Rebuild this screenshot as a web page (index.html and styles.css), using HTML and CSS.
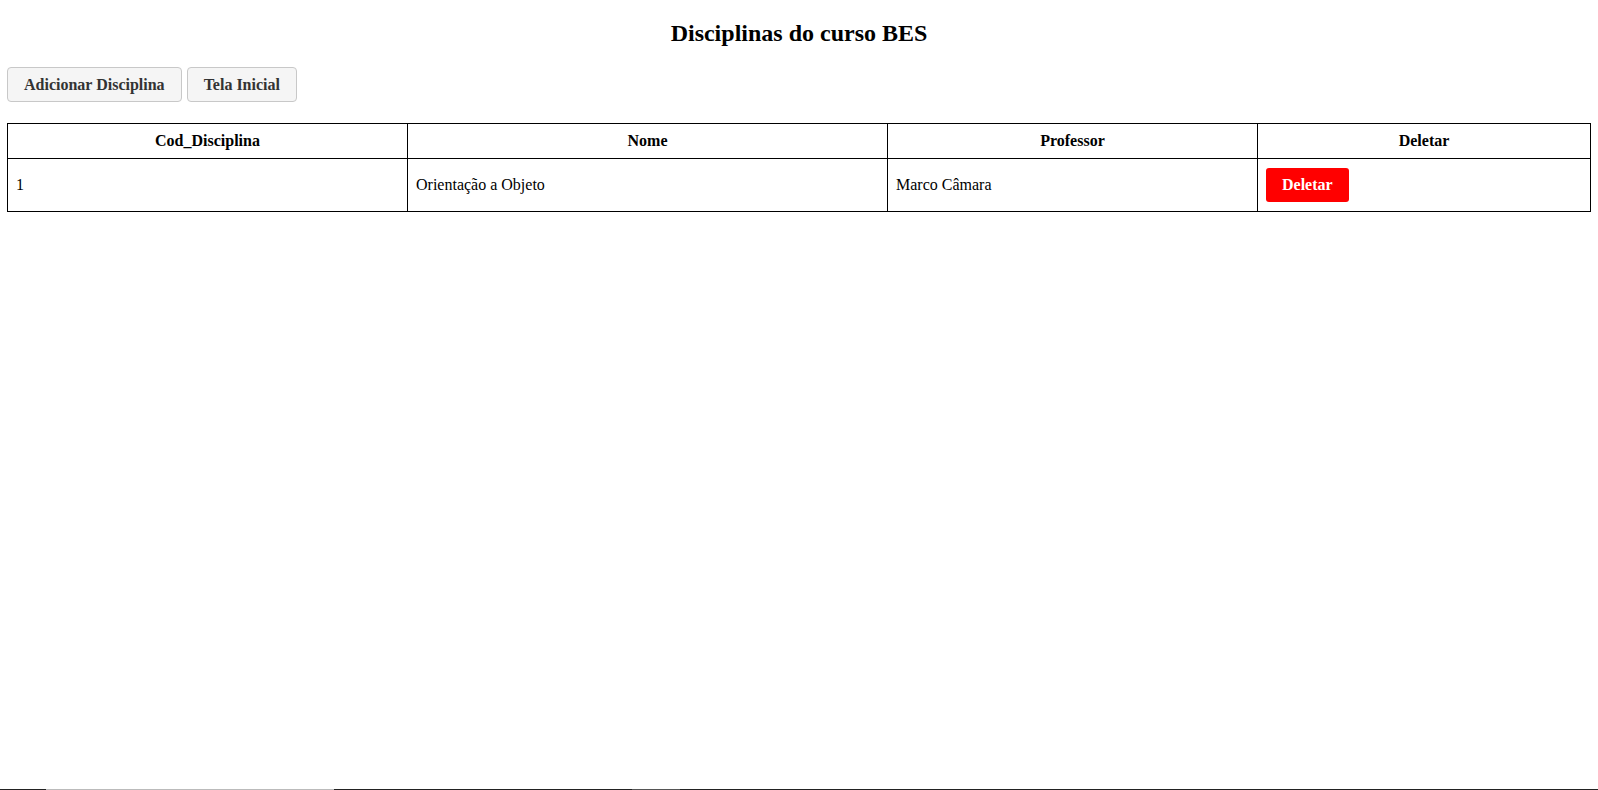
FILE: index.html
```html
<!DOCTYPE html>
<html lang="pt-BR">
<head>
<meta charset="utf-8">
<title>Disciplinas do curso BES</title>
<link rel="stylesheet" href="styles.css">
</head>
<body>
  <h2 class="title">Disciplinas do curso BES</h2>
  <div class="actions">
    <button class="btn">Adicionar Disciplina</button>
    <button class="btn">Tela Inicial</button>
  </div>
  <table class="grid">
    <colgroup>
      <col class="c1"><col class="c2"><col class="c3"><col class="c4">
    </colgroup>
    <thead>
      <tr><th>Cod_Disciplina</th><th>Nome</th><th>Professor</th><th>Deletar</th></tr>
    </thead>
    <tbody>
      <tr>
        <td>1</td>
        <td>Orientação a Objeto</td>
        <td>Marco Câmara</td>
        <td><button class="btn-del">Deletar</button></td>
      </tr>
    </tbody>
  </table>
  <div class="taskbar">
    <span class="seg s1"></span><span class="seg s2"></span><span class="seg s3"></span><span class="seg s4"></span><span class="seg s5"></span>
  </div>
</body>
</html>
```
FILE: styles.css
```css
body {
  margin: 0;
  padding: 8px 7px;
  font-family: "Liberation Serif", "Times New Roman", serif;
  font-size: 16px;
  color: #000;
  background: #fff;
}
.title {
  text-align: center;
  font-size: 24px;
  line-height: 28px;
  font-weight: bold;
  margin: 11px 0 20px;
}
.actions {
  display: flex;
  gap: 5px;
}
.btn {
  font-family: inherit;
  font-size: 16px;
  font-weight: bold;
  color: #333;
  background: #f5f5f5;
  border: 1px solid #c8c8c8;
  border-radius: 4px;
  padding: 8px 16px;
  line-height: 17px;
  cursor: pointer;
}
.grid {
  width: 100%;
  margin-top: 21px;
  border-collapse: collapse;
  table-layout: fixed;
}
.c1 { width: 400px; }
.c2 { width: 480px; }
.c3 { width: 370px; }
.c4 { width: auto; }
.grid th, .grid td {
  border: 1px solid #000;
  padding: 8px;
  line-height: 18px;
}
.grid th { text-align: center; font-weight: bold; }
.grid td { text-align: left; padding-top: 9px; padding-bottom: 9px; }
.btn-del {
  font-family: inherit;
  font-size: 16px;
  font-weight: bold;
  color: #fff;
  background: #ff0000;
  border: none;
  border-radius: 3px;
  padding: 8px 16px;
  line-height: 18px;
  cursor: pointer;
  display: block;
}
.taskbar {
  position: fixed;
  left: 0;
  right: 0;
  bottom: 0;
  height: 1px;
  display: flex;
}
.seg { height: 1px; }
.s1 { width: 46px; background: #222; }
.s2 { width: 288px; background: #bbb; }
.s3 { width: 298px; background: #222; }
.s4 { width: 48px; background: #555; }
.s5 { flex: 1; background: #222; }
```
